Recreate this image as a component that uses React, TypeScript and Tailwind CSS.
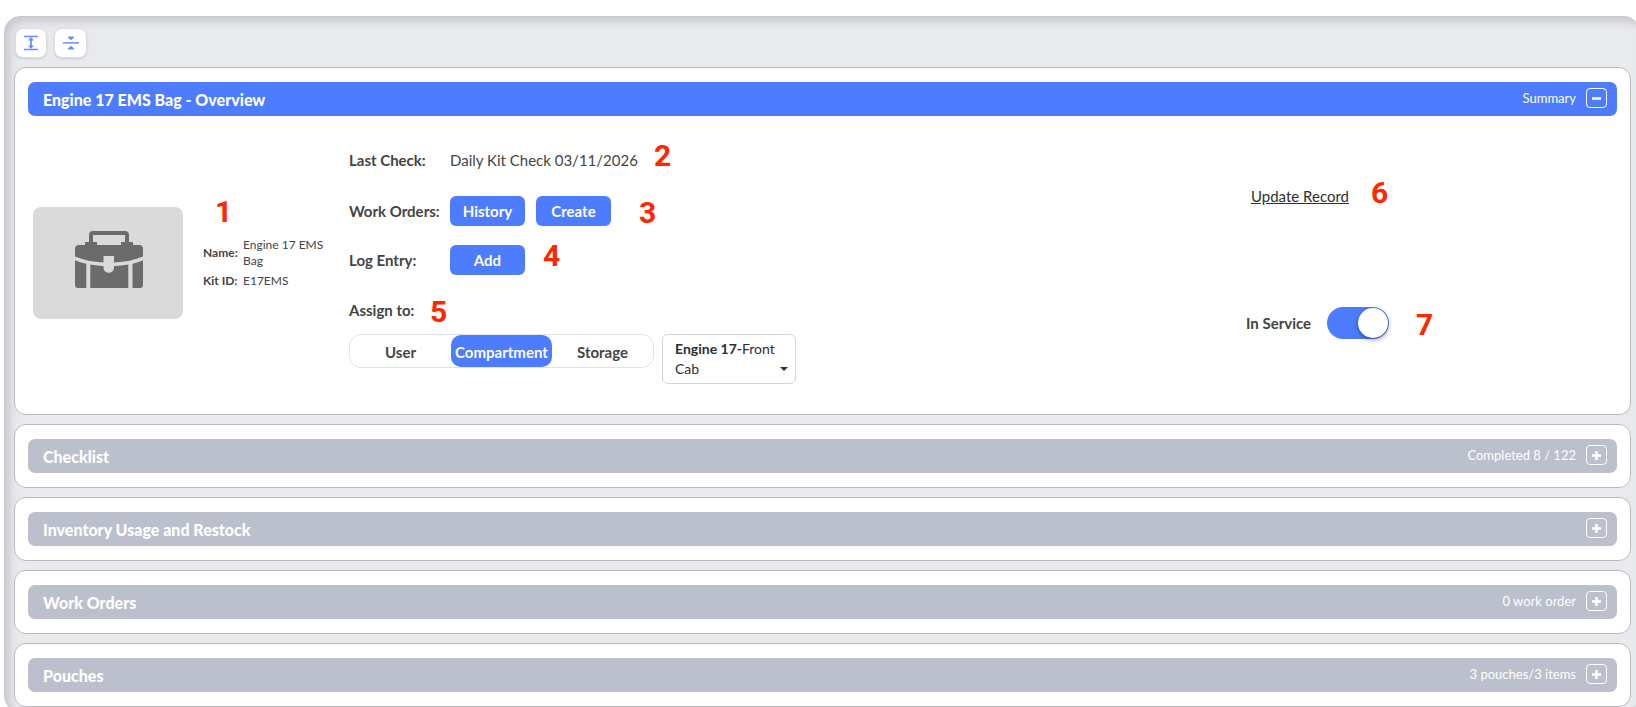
import { useState } from "react";

const sections = [
  { title: "Checklist", info: "Completed 8 / 122" },
  { title: "Inventory Usage and Restock", info: "" },
  { title: "Work Orders", info: "0 work order" },
  { title: "Pouches", info: "3 pouches/3 items" },
];

const assignOptions = ["User", "Compartment", "Storage"];

const ExpandAllIcon = () => (
  <svg viewBox="0 0 16 16" className="h-4 w-4 text-[#6690ff]" fill="currentColor" aria-hidden="true">
    <path d="M1 .8h14v1.400H1zM1 13.800h14v1.400H1z" />
    <path d="M8 2l3 3.400H8.900v5.200H11L8 14l-3-3.400h2.100V5.400H5z" />
  </svg>
);

const CollapseAllIcon = () => (
  <svg viewBox="0 0 16 16" className="h-4 w-4 text-[#6690ff]" fill="currentColor" aria-hidden="true">
    <path d="M0 7.200h16v1.500H0z" />
    <path d="M5 1.500h6v1L8 5.200 5 2.500zM5 14.500h6v-1L8 10.800 5 13.500z" />
  </svg>
);

const KitIcon = () => (
  <svg viewBox="0 0 68 57" className="h-[57px] w-[68px]" fill="#6b6b6b" aria-hidden="true">
    {/* Handle and flap */}
    <path d="M18 0h32a4 4 0 0 1 4 4v7h4v3h6a4 4 0 0 1 4 4v7.500C60 29 50 31 39 31.500V25H28.500v6.500C18 31 8 29 0 25.500V18a4 4 0 0 1 4-4h6v-3h4V4a4 4 0 0 1 4-4zm0 4v7h4v3h24v-3h4V4z" />
    {/* Lower body, split by the straps */}
    <path d="M0 29.300q5 2 11.300 3.500V57H3a3 3 0 0 1-3-3zM15.300 33.500q6 1.200 13.200 1.500v1.500a5.200 5.200 0 0 0 10.500 0V35q8-.3 14.300-1.500V57h-38zM57.500 32.800Q63 31.500 68 29.300V54a3 3 0 0 1-3 3h-7.500z" />
  </svg>
);

const Marker = ({ n, className }: { n: number; className: string }) => (
  <span
    className={`absolute font-['Roboto',sans-serif] text-[30px] leading-[30px] font-bold text-[#ff2600] ${className}`}
  >
    {n}
  </span>
);

interface SectionHeaderProps {
  title: string;
  info: string;
  open?: boolean;
}

const SectionHeader = ({ title, info, open = false }: SectionHeaderProps) => (
  <div
    className={`flex h-[34px] items-center justify-between rounded-[7px] pr-2.5 pl-[15px] text-white ${
      open ? "bg-[#4d7cff]" : "bg-[#bcc0cc]"
    }`}
  >
    <h2 className="pt-px text-base font-black">{title}</h2>
    <div className="flex items-center gap-2.5 pb-0.5">
      <span className="pt-px text-[13px]">{info}</span>
      <button
        aria-label={open ? `Collapse ${title}` : `Expand ${title}`}
        className="flex h-5 w-[21px] items-center justify-center rounded border border-white"
      >
        <svg viewBox="0 0 9 9" className="h-[9px] w-[9px]" fill="currentColor" aria-hidden="true">
          <path d="M0 3.200h9v2.600H0z" />
          {!open && <path d="M3.200 0h2.600v9H3.200z" />}
        </svg>
      </button>
    </div>
  </div>
);

const cardClass = "rounded-xl border border-[#b9bbbd] bg-white px-[13px] py-[14px]";
const buttonClass = "h-[30px] w-[75px] rounded-md bg-[#4d7cff] text-[15px] font-bold text-white";
const toolClass =
  "flex h-[30px] items-center justify-center rounded-lg border border-[#dcdde0] bg-white shadow-sm";

export default function App() {
  const [assign, setAssign] = useState("Compartment");
  const [inService, setInService] = useState(true);

  return (
    <div className="overflow-x-hidden bg-white pt-4 font-['Lato',sans-serif] text-[#444]">
      <main className="-mr-1 ml-1 rounded-2xl border border-[#c4c6ca] bg-[#e9eaee] pt-[11px] pr-2 pb-1 pl-[9px] shadow-[inset_5px_5px_8px_#c8cacf]">
        {/* Toolbar */}
        <div className="mb-[9px] ml-px flex gap-[7px]">
          <button aria-label="Expand all" className={`w-8 ${toolClass}`}>
            <ExpandAllIcon />
          </button>
          <button aria-label="Collapse all" className={`w-[33px] ${toolClass}`}>
            <CollapseAllIcon />
          </button>
        </div>

        <div className="flex flex-col gap-[9px]">
          {/* Overview */}
          <section className={cardClass}>
            <SectionHeader title="Engine 17 EMS Bag - Overview" info="Summary" open />
            <div className="flex h-[284px] pl-[5px]">
              <div className="flex w-[316px] items-center gap-5 pt-2.5">
                <div className="flex h-28 w-[150px] shrink-0 items-center justify-center rounded-lg bg-[#dadada] pb-2 pl-0.5">
                  <KitIcon />
                </div>
                <dl className="relative flex flex-1 flex-col gap-1 pr-6 text-xs leading-4">
                  <Marker n={1} className="-top-10 left-3" />
                  <div className="flex items-center">
                    <dt className="w-10 shrink-0 font-bold">Name:</dt>
                    <dd>Engine 17 EMS Bag</dd>
                  </div>
                  <div className="flex items-center">
                    <dt className="w-10 shrink-0 font-bold">Kit ID:</dt>
                    <dd>E17EMS</dd>
                  </div>
                </dl>
              </div>

              <div className="flex-1 pt-[29px] text-[15px]">
                <div className="flex h-[30px] items-center">
                  <span className="w-[101px] font-bold">Last Check:</span>
                  <span className="relative">
                    Daily Kit Check 03/11/2026
                    <Marker n={2} className="-top-2 left-[204px]" />
                  </span>
                </div>
                <div className="mt-[21px] flex h-[30px] items-center">
                  <span className="w-[101px] font-bold">Work Orders:</span>
                  <div className="relative flex gap-[11px]">
                    <button className={buttonClass}>History</button>
                    <button className={buttonClass}>Create</button>
                    <Marker n={3} className="top-0.5 left-[189px]" />
                  </div>
                </div>
                <div className="mt-[19px] flex h-[30px] items-center">
                  <span className="w-[101px] font-bold">Log Entry:</span>
                  <div className="relative flex">
                    <button className={buttonClass}>Add</button>
                    <Marker n={4} className="-top-1 left-[93px]" />
                  </div>
                </div>
                <div className="relative mt-5 flex h-[30px] items-center font-bold">
                  Assign to:
                  <Marker n={5} className="top-0.5 left-[81px]" />
                </div>
                <div className="mt-[9px] flex items-start gap-2">
                  <div
                    role="radiogroup"
                    aria-label="Assign to"
                    className="flex h-[34px] w-[305px] rounded-xl border border-[#e2e2e2]"
                  >
                    {assignOptions.map((option) => (
                      <label
                        key={option}
                        className={`flex flex-1 cursor-pointer items-center justify-center rounded-[10px] pt-0.5 font-bold ${
                          assign === option ? "bg-[#4d7cff] text-white" : ""
                        }`}
                      >
                        <input
                          type="radio"
                          name="assign"
                          className="sr-only"
                          checked={assign === option}
                          onChange={() => setAssign(option)}
                        />
                        {option}
                      </label>
                    ))}
                  </div>
                  <select
                    aria-label="Compartment"
                    className="w-[134px] cursor-pointer rounded-md border border-[#d4d4d4] bg-white py-1 pr-[7px] pl-3 text-sm leading-5 text-[#2e2e2e] [appearance:base-select] [&::picker-icon]:hidden"
                  >
                    <button className="flex w-full items-end justify-between text-left">
                      <span>
                        <b>Engine 17-</b>Front Cab
                      </span>
                      <svg viewBox="0 0 8 4" className="mb-2 h-1 w-2 shrink-0" fill="currentColor" aria-hidden="true">
                        <path d="M0 0h8L4 4z" />
                      </svg>
                    </button>
                    <option>Engine 17-Front Cab</option>
                  </select>
                </div>
              </div>

              <div className="w-[371px] pt-[70px] text-[15px]">
                <div className="relative ml-[5px] leading-5">
                  <a href="#update" className="text-[#2e2e2e] underline">
                    Update Record
                  </a>
                  <Marker n={6} className="-top-2 left-[120px]" />
                </div>
                <label className="relative mt-[101px] flex h-8 cursor-pointer items-center">
                  <span className="w-[81px] font-bold">In Service</span>
                  <input
                    type="checkbox"
                    role="switch"
                    className="sr-only"
                    checked={inService}
                    onChange={(e) => setInService(e.target.checked)}
                  />
                  <span
                    className={`flex h-8 w-[62px] items-center rounded-full px-px ${
                      inService ? "justify-end bg-[#4d7cff]" : "justify-start bg-[#bcc0cc]"
                    }`}
                  >
                    <span className="h-[30px] w-[30px] rounded-full bg-white shadow-[0_2px_5px_#00000066]" />
                  </span>
                  <Marker n={7} className="top-[3px] left-[170px]" />
                </label>
              </div>
            </div>
          </section>

          {sections.map((section) => (
            <section key={section.title} className={cardClass}>
              <SectionHeader title={section.title} info={section.info} />
            </section>
          ))}
        </div>
      </main>
    </div>
  );
}
